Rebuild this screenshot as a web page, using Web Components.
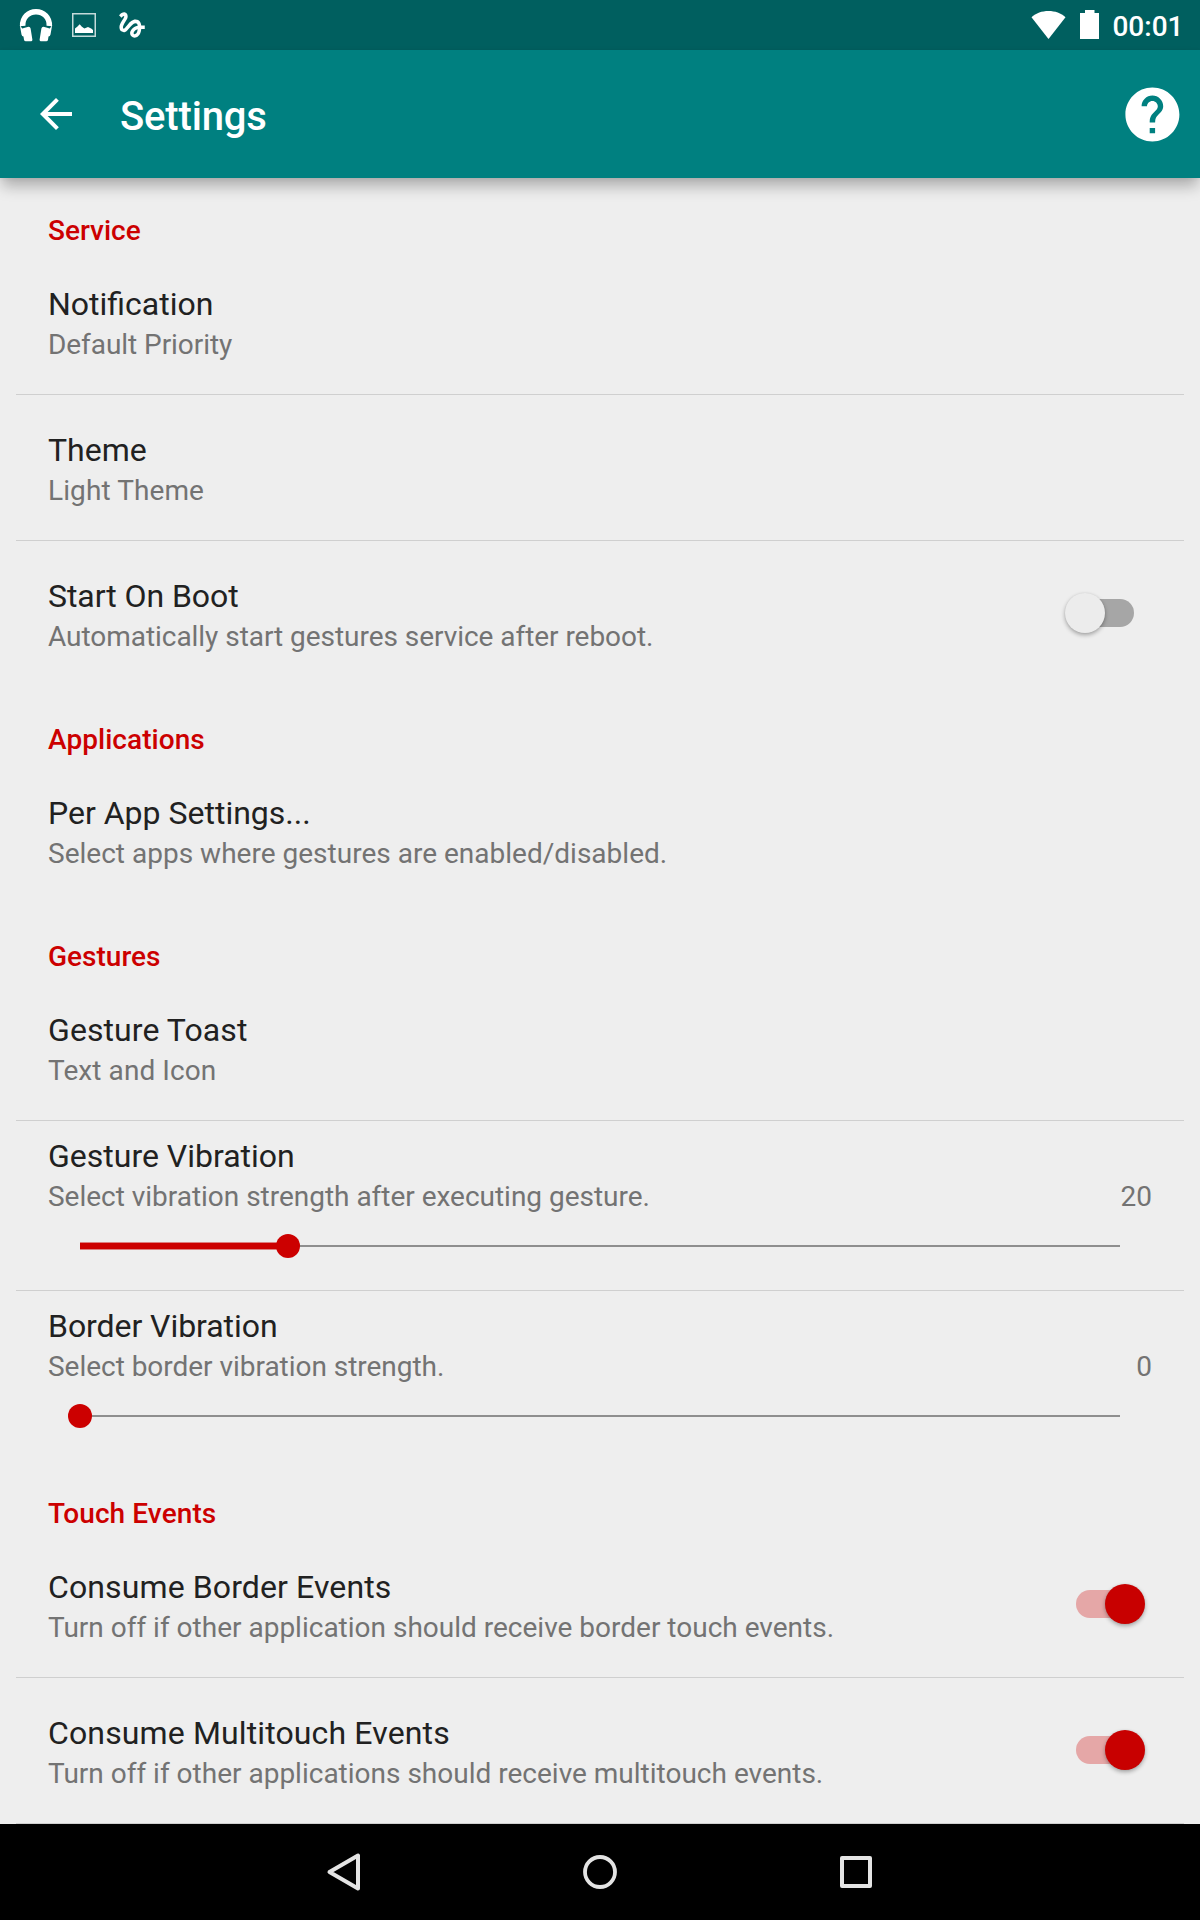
<!DOCTYPE html>
<html lang="en">
<head>
<meta charset="utf-8">
<title>Settings</title>
<style>
html,body{margin:0;padding:0}
body{width:1200px;height:1920px;overflow:hidden;background:#eee;font-family:Roboto,"Liberation Sans",sans-serif;display:flex;flex-direction:column}
settings-list{flex:1}
</style>
</head>
<body>
<status-bar time="00:01"></status-bar>
<app-bar>Settings</app-bar>
<settings-list>
  <list-header>Service</list-header>
  <pref-row divider><span slot="title">Notification</span><span slot="summary" style="letter-spacing:-.06px">Default Priority</span></pref-row>
  <pref-row divider><span slot="title">Theme</span><span slot="summary" style="letter-spacing:.1px">Light Theme</span></pref-row>
  <pref-row><span slot="title" style="letter-spacing:-.06px">Start On Boot</span><span slot="summary" style="letter-spacing:-.045px">Automatically start gestures service after reboot.</span><toggle-switch slot="widget"></toggle-switch></pref-row>
  <list-header style="letter-spacing:.05px">Applications</list-header>
  <pref-row><span slot="title">Per App Settings...</span><span slot="summary" style="letter-spacing:.01px">Select apps where gestures are enabled/disabled.</span></pref-row>
  <list-header>Gestures</list-header>
  <pref-row divider><span slot="title" style="letter-spacing:.08px">Gesture Toast</span><span slot="summary" style="letter-spacing:.08px">Text and Icon</span></pref-row>
  <slider-row divider value="20"><span slot="title">Gesture Vibration</span><span slot="summary" style="letter-spacing:-.02px">Select vibration strength after executing gesture.</span></slider-row>
  <slider-row value="0"><span slot="title" style="letter-spacing:-.06px">Border Vibration</span><span slot="summary" style="letter-spacing:-.03px">Select border vibration strength.</span></slider-row>
  <list-header style="letter-spacing:.09px">Touch Events</list-header>
  <pref-row divider><span slot="title" style="letter-spacing:.11px">Consume Border Events</span><span slot="summary">Turn off if other application should receive border touch events.</span><toggle-switch slot="widget" checked></toggle-switch></pref-row>
  <pref-row divider><span slot="title" style="letter-spacing:.13px">Consume Multitouch Events</span><span slot="summary">Turn off if other applications should receive multitouch events.</span><toggle-switch slot="widget" checked></toggle-switch></pref-row>
</settings-list>
<nav-bar></nav-bar>
<script>
const define = (name, render) => customElements.define(name, class extends HTMLElement {
  constructor() { super(); this.attachShadow({ mode: 'open' }); }
  connectedCallback() { this.shadowRoot.innerHTML = render(this); }
});

define('status-bar', el => `<style>
:host{display:flex;box-sizing:border-box;height:50px;background:#005f5f;color:#fff;justify-content:space-between;padding:0 16.500px 0 19px}
div{display:flex;align-items:flex-start}
svg{display:block;flex:none}
.time{font-size:28px;font-weight:500;line-height:33px;margin:10px 0 0 13px}
</style>
<div>
<svg width="34" height="50" viewBox="0 0 34 50" fill="#fff"><path d="M3.700 26C3.200 17.500 9.500 11.700 17 11.700S30.800 17.500 30.300 26" fill="none" stroke="#fff" stroke-width="5.500"/><path id="cup" d="M.8 25 3.200 28.500 9.500 26.800Q11.300 26.800 11.600 28.500L13.400 39.800Q13.400 41.300 12 41.300H6.800Q5.300 41.300 5 39.800L4.500 36.500Q2.900 36.300 2.500 34.500z"/><use href="#cup" transform="translate(34 0) scale(-1 1)"/></svg>
<svg width="24" height="50" viewBox="0 0 24 50" style="margin-left:19px"><rect x=".75" y="13.750" width="22.500" height="22.500" fill="none" stroke="#c4dada" stroke-width="1.500"/><path d="M3 33v-4.500l2.500-2 2.200-2.300 2.200 2.500 2.500 1.800 3.600-1.500 3.200 1.500 1.800 1.500v3z" fill="#fff"/></svg>
<svg width="34" height="34" viewBox="0 0 24 24" fill="#fff" style="margin:7.700px 0 0 19.300px"><path d="M4.590 6.890c.7-.71 1.400-1.350 1.710-1.220.5.2 0 1.030-.3 1.520-.25.420-2.860 3.890-2.860 6.310 0 1.280.48 2.340 1.340 2.980.75.560 1.740.730 2.640.460 1.070-.31 1.950-1.400 3.060-2.770 1.210-1.490 2.830-3.440 4.080-3.440 1.630 0 1.650 1.010 1.760 1.790-3.780.640-5.380 3.670-5.380 5.370 0 1.700 1.440 3.090 3.210 3.090 1.630 0 4.290-1.330 4.690-6.100H21v-2.500h-2.470c-.15-1.650-1.090-4.200-4.030-4.200-2.250 0-4.180 1.910-4.940 2.840-.58.730-2.060 2.480-2.290 2.720-.25.300-.68.840-1.110.840-.45 0-.72-.83-.36-1.920.35-1.090 1.400-2.860 1.850-3.520.78-1.140 1.300-1.920 1.300-3.280C8.950 3.690 7.310 3 6.440 3 5.120 3 3.970 4 3.720 4.250c-.36.360-.66.660-.88.930l1.750 1.710zm9.290 11.660c-.31 0-.74-.26-.74-.72 0-.6.730-2.200 2.870-2.760-.3 2.690-1.430 3.480-2.130 3.480z"/></svg>
</div>
<div>
<svg width="35" height="50" viewBox="0 0 35 50" fill="#fff"><path d="M17.500 39 .500 17.200C5 13 11 11 17.500 11s12.500 2 17 6.200z"/></svg>
<svg width="19" height="50" viewBox="0 0 19 50" fill="#fff" style="margin-left:14.500px"><path d="M5 10h9.500v3H19v26H0V13h5z"/></svg>
<span class="time">${el.getAttribute('time')}</span>
</div>`);

define('app-bar', () => `<style>
:host{display:flex;flex:none;box-sizing:border-box;height:128px;background:#008080;color:#fff;align-items:center;padding:0 15.600px 0 32px;position:relative;z-index:1;box-shadow:0 10px 14px -2px rgba(0,0,0,.28),0 1px 4px rgba(0,0,0,.05)}
svg{display:block;flex:none}
h1{flex:1;margin:5px 0 0 40px;font-size:40px;font-weight:500;line-height:47px;letter-spacing:-.15px}
</style>
<svg width="48" height="48" viewBox="0 0 24 24" fill="#fff"><path d="M20 11H7.830l5.590-5.590L12 4l-8 8 8 8 1.410-1.410L7.830 13H20v-2z"/></svg>
<h1><slot></slot></h1>
<svg width="64.800" height="64.800" viewBox="0 0 24 24" fill="#fff"><path d="M12 2C6.480 2 2 6.480 2 12s4.480 10 10 10 10-4.480 10-10S17.520 2 12 2zm1 17h-2v-2h2v2zm2.070-7.750l-.9.920C13.450 12.900 13 13.500 13 15h-2v-.5c0-1.100.45-2.100 1.170-2.830l1.240-1.260c.37-.36.590-.86.590-1.410 0-1.100-.9-2-2-2s-2 .9-2 2H8c0-2.210 1.790-4 4-4s4 1.790 4 4c0 .88-.36 1.680-.93 2.250z"/></svg>`);

define('settings-list', () => `<style>
:host{display:flex;flex-direction:column;margin-top:-1px;min-height:0}
</style><slot></slot>`);

define('list-header', () => `<style>
:host{display:block;box-sizing:border-box;height:72px;flex:none;padding:37px 48px 0;color:#c00;font-size:28px;font-weight:500;line-height:33px}
</style><slot></slot>`);

const rowText = `
.title{color:#212121;font-size:32px;line-height:38px}
.summary{color:#737373;font-size:28px;line-height:33px;margin-top:5px}
:host([divider])::after{content:"";height:1px;background:#cfcfcf;margin:0 16px}`;

define('pref-row', () => `<style>
:host{display:flex;flex-direction:column;flex:none}
.row{display:flex;justify-content:space-between;height:145px;padding:0 48px}
.text{padding-top:36px}
.widget{padding-top:52px}
${rowText}
</style>
<div class="row"><div class="text"><div class="title"><slot name="title"></slot></div><div class="summary"><slot name="summary"></slot></div></div>
<div class="widget"><slot name="widget"></slot></div></div>`);

define('toggle-switch', el => {
  const on = el.hasAttribute('checked');
  return `<style>
:host{display:flex;align-items:center;width:98px;height:40px}
.track{width:58px;height:28px;border-radius:14px;background:${on ? '#e5a7a7' : '#a6a6a6'};margin-left:22px}
.thumb{width:40px;height:40px;border-radius:50%;background:${on ? '#c80000' : '#ececec'};margin-left:${on ? -29 : -69}px;box-shadow:0 2px 4px rgba(0,0,0,.32),0 0 2px rgba(0,0,0,.06)}
</style><div class="track"></div><div class="thumb"></div>`;
});

define('slider-row', el => {
  const v = +el.getAttribute('value');
  return `<style>
:host{display:flex;flex-direction:column;flex:none}
.row{display:flex;flex-direction:column;height:169px;box-sizing:border-box;padding:16px 48px 0}
.line{display:flex;justify-content:space-between}
.slider{display:flex;align-items:center;height:24px;margin:21px 32px 0}
.fill{width:${v}%;height:6px;background:#c00;box-sizing:content-box;border:solid #dc8080;border-width:1px 0}
.thumb{width:24px;height:24px;border-radius:50%;background:#c00;margin:0 -12px;flex:none;z-index:1}
.rest{flex:1;height:2px;background:#8e8e8e}
${rowText}
</style>
<div class="row"><div class="title"><slot name="title"></slot></div>
<div class="line summary"><slot name="summary"></slot><span>${v}</span></div>
<div class="slider"><div class="fill"></div><div class="thumb"></div><div class="rest"></div></div></div>`;
});

define('nav-bar', () => `<style>
:host{display:flex;flex:none;height:96px;background:#000;align-items:center;justify-content:center;gap:208px}
svg{display:block}
</style>
<svg width="48" height="48" viewBox="0 0 48 48" fill="none" stroke="#e4e4e4" stroke-width="4" stroke-linejoin="round"><path d="M38 7.500v33L9.500 24z"/></svg>
<svg width="48" height="48" viewBox="0 0 48 48" fill="none" stroke="#e4e4e4" stroke-width="3.800"><circle cx="24" cy="24" r="15"/></svg>
<svg width="48" height="48" viewBox="0 0 48 48" fill="none" stroke="#e4e4e4" stroke-width="4" stroke-linejoin="round"><path d="M10 10h28v28H10z"/></svg>`);
</script>
</body>
</html>
